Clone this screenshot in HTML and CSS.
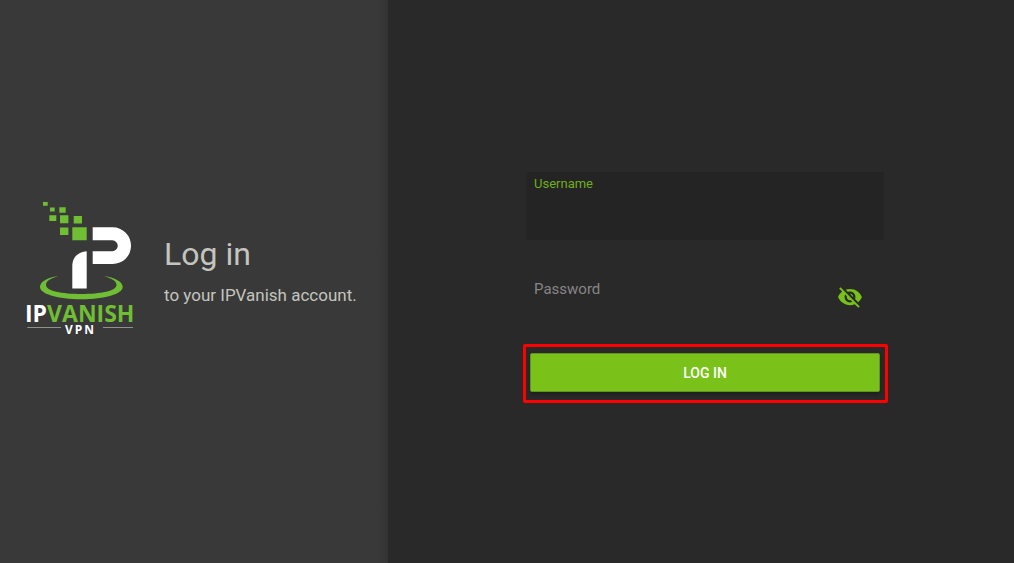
FILE: index.html
```html
<!DOCTYPE html>
<html lang="en">
<head>
<meta charset="utf-8">
<meta name="viewport" content="width=device-width, initial-scale=1">
<title>IPVanish VPN – Log in</title>
<link rel="stylesheet" href="styles.css">
</head>
<body>
<main class="screen">
  <section class="intro">
    <svg class="logo" viewBox="26 200 110 140" role="img" aria-label="IPVanish VPN">
      <g class="logo-green">
        <path d="M43 202h4.7v3.8H43zM50 207.6h4.7v4H50zM59.3 207.3h6.4v5.4h-6.4zM49.3 215.3h7v5.7h-7zM60 215.3h8.4v8H60zM73.7 216h8.3v7.4h-8.3zM60 227.6h8.4v7.4H60zM72.3 227.3h14.4v13H72.3z"/>
        <path d="M58.5 276C46 278 40 282 40 287c0 7 18 12.200 41.300 12.200S122.700 294 122.700 287C122.700 282 116 278 104 276c8 2.500 12.500 5 12.500 9 0 6-16 9-35.200 9S46 291 46 285c0-4 4-6.500 12.500-9z"/>
      </g>
      <g class="logo-white">
        <path d="M92.700 227.300H112.700a18.350 18.350 0 0 1 0 36.700H92.700V251.200H112.300a5.450 5.450 0 0 0 0-10.900H92.700z"/>
        <path d="M86.700 251.200V288.400H72.300V266C72.300 257.500 78 251.700 86.700 251.200z"/>
      </g>
      <path class="logo-rule" d="M27.300 327.500H61M103 327.500H133"/>
      <text class="logo-name" x="25" y="322">IP<tspan class="logo-green">VANISH</tspan></text>
      <text class="logo-tag" x="65" y="334">VPN</text>
    </svg>
    <div class="intro-copy">
      <h1 class="title">Log in</h1>
      <p class="subtitle">to your IPVanish account.</p>
    </div>
  </section>
  <section class="panel">
    <form class="form">
      <div class="field field-active">
        <label class="label label-active" for="username">Username</label>
        <input class="input" id="username" type="text" autocomplete="username">
      </div>
      <div class="field field-password">
        <div class="field-body">
          <label class="label" for="password">Password</label>
          <input class="input" id="password" type="password" autocomplete="current-password">
        </div>
        <button class="reveal" type="button" aria-label="Show password">
          <svg class="reveal-icon" viewBox="0 0 24 24" aria-hidden="true"><path d="M12 7c2.760 0 5 2.240 5 5 0 .65-.13 1.260-.36 1.830l2.920 2.920c1.510-1.260 2.700-2.890 3.430-4.750-1.730-4.390-6-7.500-11-7.500-1.400 0-2.740.25-3.980.7l2.160 2.160C10.740 7.130 11.350 7 12 7zM2 4.270l2.280 2.280.46.46C3.080 8.300 1.780 10.020 1 12c1.730 4.390 6 7.500 11 7.500 1.550 0 3.030-.3 4.380-.84l.42.42L19.730 22 21 20.730 3.270 3 2 4.270zM7.530 9.800l1.550 1.550c-.05.21-.08.43-.08.65 0 1.660 1.340 3 3 3 .22 0 .44-.03.65-.08l1.550 1.550c-.67.33-1.410.53-2.200.53-2.760 0-5-2.240-5-5 0-.79.2-1.530.53-2.200zm4.310-.78 3.150 3.150.02-.16c0-1.660-1.340-3-3-3l-.17.01z"/></svg>
        </button>
      </div>
      <div class="highlight">
        <button class="submit" type="submit">LOG IN</button>
      </div>
    </form>
  </section>
</main>
</body>
</html>
```
FILE: styles.css
```css
* {
  box-sizing: border-box;
}

body {
  margin: 0;
  background: #292929;
  font-family: Roboto, "Liberation Sans", sans-serif;
}

.screen {
  display: grid;
  grid-template-columns: 62fr 100fr;
  min-height: 100vh;
}

.intro {
  display: flex;
  align-items: center;
  gap: 28px;
  padding: 0 24px 24px 26px;
  background: linear-gradient(to left, #333333, #393939 10px);
}

.logo {
  flex: none;
  width: 110px;
  height: 140px;
}

.logo-green {
  fill: #6fbe34;
}

.logo-white {
  fill: #ffffff;
}

.logo-rule {
  stroke: #8d938b;
  stroke-width: 1;
}

.logo-name,
.logo-tag {
  fill: #ffffff;
  font-family: "Open Sans", "Noto Sans", sans-serif;
  font-weight: 700;
}

.logo-name {
  font-size: 23px;
}

.logo-name .logo-green {
  fill: #6fbe34;
}

.logo-tag {
  font-size: 12px;
  letter-spacing: 2px;
}

.title {
  margin: 0 0 12px;
  color: #c3c5be;
  font-size: 32px;
  font-weight: 400;
  line-height: 38px;
}

.subtitle {
  margin: 0;
  color: #c3c5be;
  font-size: 17px;
  line-height: 20px;
  white-space: nowrap;
}

.panel {
  display: flex;
  align-items: center;
  justify-content: center;
  padding: 12px 0 0 9px;
}

.form {
  width: 365px;
}

.field {
  height: 68px;
  margin: 0 4px 24px 3px;
  padding: 4px 8px 0;
  border-radius: 3px;
}

.field-active {
  background: #242424;
}

.field-password {
  display: flex;
  align-items: center;
  margin-bottom: 12px;
  padding: 0 21px 2px 8px;
}

.field-body {
  flex: 1;
  height: 100%;
  padding-top: 15px;
}

.label {
  display: block;
  color: #868686;
  font-size: 15px;
  line-height: 20px;
}

.label-active {
  color: #6fae1d;
  font-size: 13px;
  line-height: 16px;
}

.input {
  display: block;
  width: 100%;
  height: 30px;
  padding: 0;
  border: 0;
  outline: 0;
  background: transparent;
  color: #dddddd;
  font: inherit;
}

.reveal {
  display: flex;
  padding: 0;
  border: 0;
  background: transparent;
}

.reveal-icon {
  width: 26px;
  height: 26px;
  fill: #78c11a;
}

.highlight {
  padding: 6px 5px 8px 4px;
  border: 3px solid #ff0000;
  border-radius: 2px;
}

.submit {
  display: block;
  width: 100%;
  height: 39px;
  padding: 1px 0 0;
  border: 1px solid #5f961d;
  border-radius: 2px;
  background: #7ac11a;
  box-shadow: 0 3px 3px #212121;
  color: #ffffff;
  font: 500 14px Roboto, "Liberation Sans", sans-serif;
}
```
